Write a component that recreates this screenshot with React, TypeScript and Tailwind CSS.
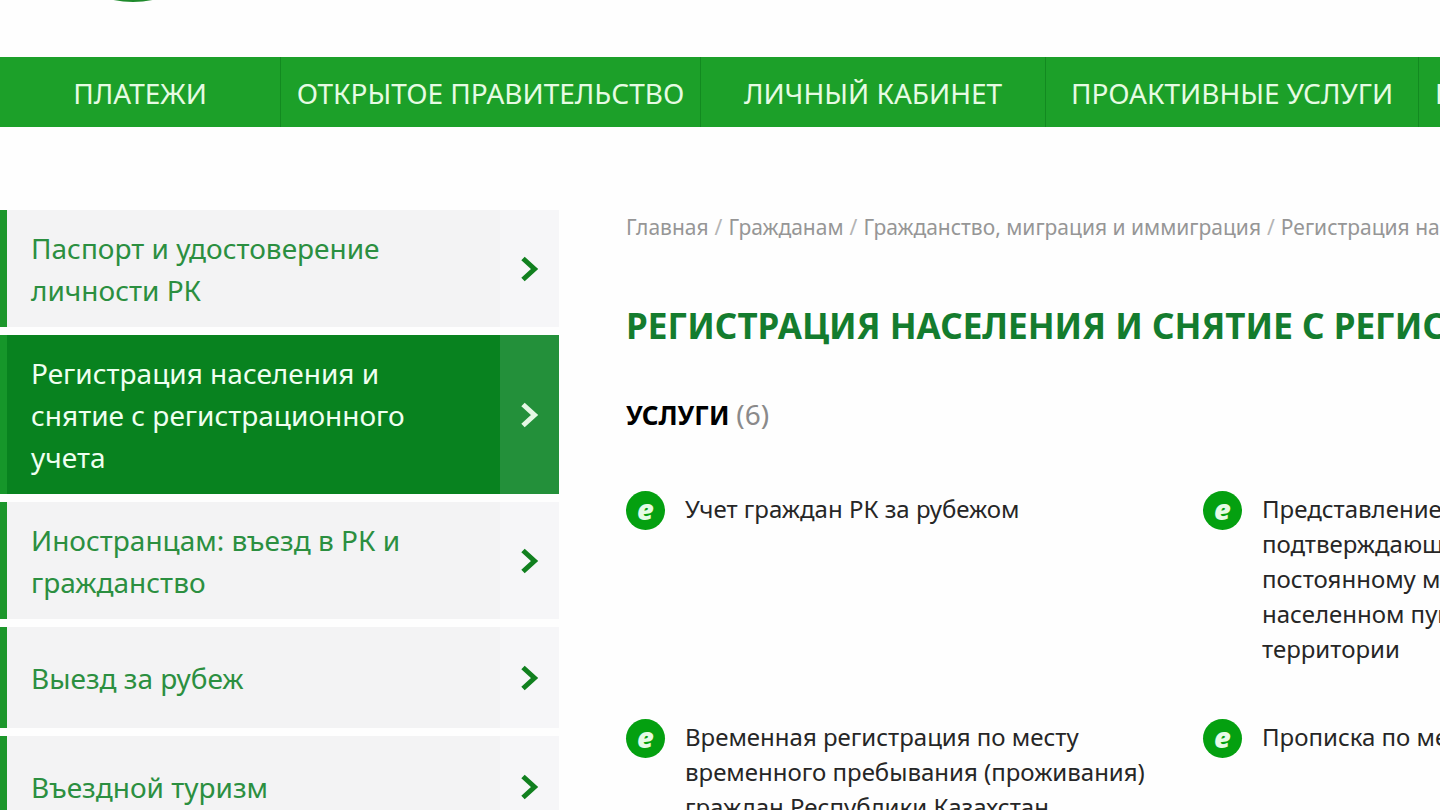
'use client'

import { ReactNode } from "react"

const navItems = [
    { label: "ПЛАТЕЖИ", className: "w-[281px] justify-center" },
    { label: "ОТКРЫТОЕ ПРАВИТЕЛЬСТВО", className: "w-[420px] justify-center" },
    { label: "ЛИЧНЫЙ КАБИНЕТ", className: "w-[345px] justify-center" },
    { label: "ПРОАКТИВНЫЕ УСЛУГИ", className: "w-[373px] justify-center" },
    { label: "ПОМОЩЬ", className: "px-4" },
]

const categories = [
    { label: "Паспорт и удостоверение личности РК" },
    { label: "Регистрация населения и снятие с регистрационного учета", active: true },
    { label: "Иностранцам: въезд в РК и гражданство" },
    { label: "Выезд за рубеж" },
    { label: "Въездной туризм" },
]

const breadcrumbs = [
    "Главная",
    "Гражданам",
    "Гражданство, миграция и иммиграция",
    "Регистрация населения и снятие с учета",
]

function Chevron() {
    return (
        <svg width="20" height="28" viewBox="0 0 20 28" fill="none" stroke="currentColor" strokeWidth="5" aria-hidden="true">
            <path d="M3 3.5 L14.5 14 L3 24.5" />
        </svg>
    )
}

function Category({ label, active }: { label: string, active?: boolean }) {
    return (
        <li>
            <a
                href="#"
                className={
                    active
                        ? "flex min-h-[101px] border-l-[7px] border-[#16962a] bg-[#08821f] text-[#effff0]"
                        : "flex min-h-[101px] border-l-[7px] border-[#1c962b] bg-[#f3f3f4] text-[#2b8f40]"
                }
            >
                <span className="flex flex-1 items-center pt-[17px] pr-12 pb-4 pl-6 text-[28px] leading-[42px]">
                    {label}
                </span>
                <span
                    className={
                        active
                            ? "flex w-[59px] items-center justify-center bg-[#23903a] text-[#e4f8e4]"
                            : "flex w-[59px] items-center justify-center bg-[#f6f6f8] text-[#11801f]"
                    }
                >
                    <Chevron />
                </span>
            </a>
        </li>
    )
}

function Service({ children }: { children: ReactNode }) {
    return (
        <a href="#" className="flex items-start gap-5 text-[24px] leading-[35px] text-[#262626]">
            <span className="flex size-[39px] shrink-0 items-center justify-center rounded-full bg-[#04a010] pb-1 text-[29px] leading-[35px] font-black text-[#e6fbe6] italic">
                e
            </span>
            <span className="w-[480px]">{children}</span>
        </a>
    )
}

export default function App() {
    return (
        <div className="min-h-screen overflow-x-clip bg-[#fefefe] font-['Noto_Sans',sans-serif]">
            <header>
                <div className="h-[57px] pl-[33px]">
                    <svg width="200" height="3" viewBox="0 0 200 3" aria-hidden="true">
                        <circle cx="100" cy="-98" r="100" fill="#1f8a2c" />
                    </svg>
                </div>
                <nav className="flex h-[70px] bg-[#1ca029] text-[28px] whitespace-nowrap text-[#e6fbe3]">
                    {navItems.map((item) => (
                        <a key={item.label} href="#" className={`${item.className} flex shrink-0 items-center border-r border-[#128a20] pt-0.5`}>
                            {item.label}
                        </a>
                    ))}
                </nav>
            </header>

            <div className="flex pt-[83px]">
                <aside className="w-[559px] shrink-0">
                    <ul className="flex flex-col gap-2">
                        {categories.map((c) => (
                            <Category key={c.label} label={c.label} active={c.active} />
                        ))}
                    </ul>
                </aside>

                <main className="ml-[67px] shrink-0 pt-[3px]">
                    <nav className="flex gap-1.5 text-[21px] leading-7 whitespace-nowrap text-[#969696]">
                        {breadcrumbs.map((b, i) => (
                            <span key={b} className="flex gap-1.5">
                                {i > 0 && <span className="text-[#b4b4b4]">/</span>}
                                <a href="#">{b}</a>
                            </span>
                        ))}
                    </nav>
                    <h1 className="mt-[63px] text-[35px] leading-[44px] font-bold whitespace-nowrap text-[#147c2e]">
                        РЕГИСТРАЦИЯ НАСЕЛЕНИЯ И СНЯТИЕ С РЕГИСТРАЦИОННОГО УЧЕТА
                    </h1>
                    <h2 className="mt-12 text-[26px] leading-9 font-bold text-black">
                        УСЛУГИ <span className="text-[28px] font-normal text-[#8a8a8a]">(6)</span>
                    </h2>
                    <div className="mt-[58px] grid w-[1154px] grid-cols-2 gap-y-[53px]">
                        <Service>Учет граждан РК за рубежом</Service>
                        <Service>
                            Представление сведений,<br />
                            подтверждающих отношение к<br />
                            постоянному месту жительства в<br />
                            населенном пункте приграничной<br />
                            территории
                        </Service>
                        <Service>Временная регистрация по месту временного пребывания (проживания) граждан Республики Казахстан</Service>
                        <Service>Прописка по месту жительства</Service>
                    </div>
                </main>
            </div>
        </div>
    )
}
